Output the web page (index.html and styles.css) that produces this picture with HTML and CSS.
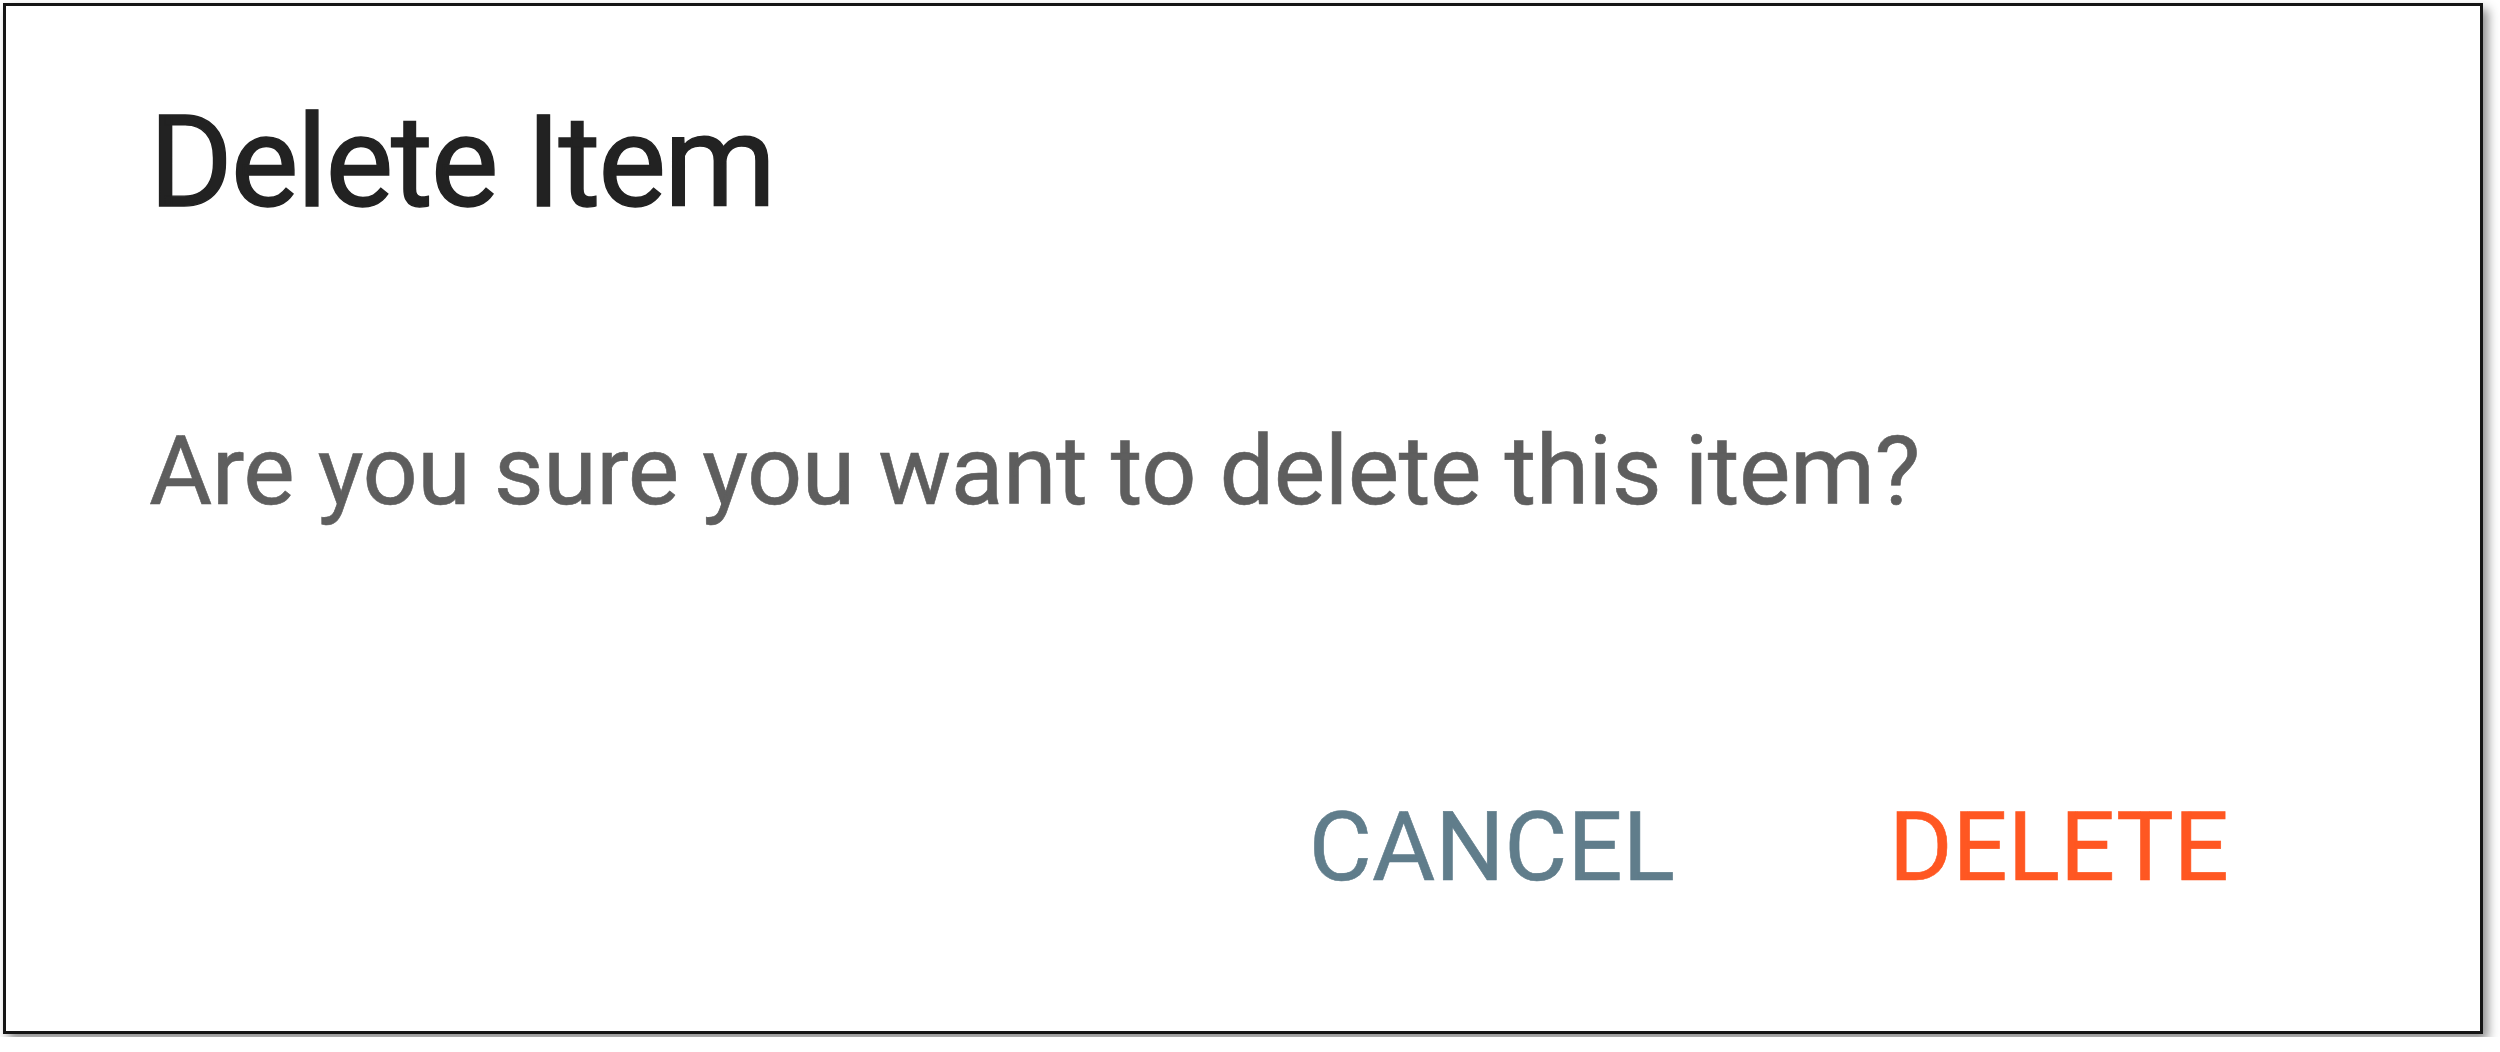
FILE: index.html
```html
<!DOCTYPE html>
<html>
<head>
    <meta charset="UTF-8">
    <meta name="viewport" content="width=device-width, initial-scale=1.0">
    <title>Delete Item</title>
    <link rel="stylesheet" href="styles.css">
</head>
<body>
    <div class="dialog">
        <h1 class="dialog-title">Delete Item</h1>
        <p class="dialog-text">Are you sure you want to delete this item?</p>
        <div class="dialog-actions">
            <button class="btn btn-cancel">CANCEL</button>
            <button class="btn btn-delete">DELETE</button>
        </div>
    </div>
</body>
</html>
```

FILE: styles.css
```css
* { box-sizing: border-box; }
html, body { margin: 0; padding: 0; background: #fff; }
body { font-family: Roboto, "Noto Sans", Arial, sans-serif; padding: 3px; }

.dialog {
    width: 2480px;
    height: 1031px;
    border: 3px solid #151515;
    background: #fff;
    box-shadow: 5px 6px 10px rgba(0, 0, 0, 0.45);
    padding: 92px 0 0 143px;
    display: flex;
    flex-direction: column;
}
.dialog-title { margin: 0; font-size: 128px; line-height: 1; font-weight: 400; letter-spacing: -2.2px; color: #222; -webkit-text-stroke: 1.4px #222; }
.dialog-text { margin: 197px 0 0; font-size: 97px; line-height: 1; letter-spacing: -0.5px; color: #5e5e5e; -webkit-text-stroke: 0.6px #5e5e5e; }
.dialog-actions { margin-top: 279px; display: flex; justify-content: flex-end; gap: 214px; padding-right: 251px; }
.btn { border: none; background: none; padding: 0; margin: 0; font-family: inherit; font-size: 97px; line-height: 1; cursor: pointer; -webkit-text-stroke: 0.6px currentColor; }
.btn-cancel { color: #607d8b; }
.btn-delete { color: #ff5722; }
```
